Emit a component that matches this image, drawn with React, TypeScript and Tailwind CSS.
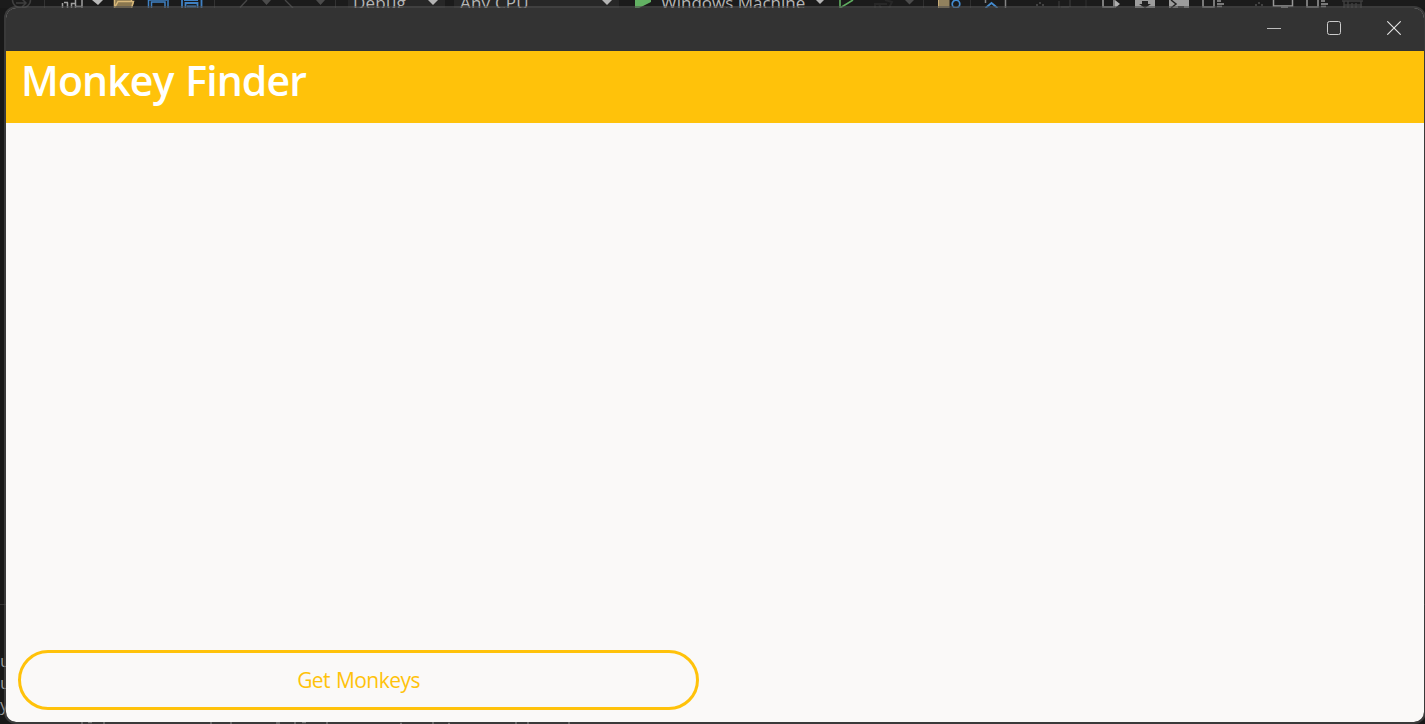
import React from "react";

function ToolbarIconsLeft() {
  return (
    <svg width="348" height="8" viewBox="0 0 348 8" fill="none" className="shrink-0">
      <path d="M12.5 0C12.5 5 17 8 21.5 8S30.500 5 30.500 0M16 3h9M22 -1l4 4-4 4" stroke="#3f3f3f" strokeWidth="1.5" />
      <path d="M44.500 0v8M214.500 0v8M335.500 0v8" stroke="#333333" />
      <path d="M62.500 3v5M68 2.500h-4M67.500 8V2.500M71.500 8V3.500h4M75.500 0v8M82 0v8M75 6.500h7" stroke="#a0a0a0" strokeWidth="1.5" />
      <path d="M92 0h11l-5 5z" fill="#b8b8b8" />
      <path d="M114 0h18v2h2l-2 6h-18z" fill="#8a774f" />
      <path d="M114.500 0v8M115 7l3-5.500h15.500l-2 6.500M131.500 0v1" stroke="#d8b879" strokeWidth="1.5" />
      <path d="M148.500 0v8M168 0v8M151.500 8V2h13.500v6M149 0h18" stroke="#3f81c4" strokeWidth="1.5" />
      <path d="M182 0v8M201.500 0v8M185.500 8V3h12v5M184 0h14M187 6.500h9" stroke="#3f81c4" strokeWidth="1.8" />
      <path d="M247 0l-7 7.500M285 0l8 8" stroke="#474747" strokeWidth="1.4" />
      <path d="M262 0h9l-4.500 5zM316 0h9l-4.500 5z" fill="#4b4b4b" />
    </svg>
  );
}

function DropArrow() {
  return (
    <svg width="10" height="8" viewBox="0 0 10 8" className="shrink-0">
      <path d="M0 0h10L5 5z" fill="#b4b4b4" />
    </svg>
  );
}

function ToolbarIconsRight() {
  return (
    <svg width="590" height="8" viewBox="835 0 590 8" fill="none" className="shrink-0">
      <path d="M840 0v8l13-8" stroke="#5fae60" strokeWidth="1.6" />
      <path d="M875 8V4h4l2 4M885 0l7 2-3 6M879 4h8" stroke="#272727" strokeWidth="2" />
      <path d="M905 0h9l-4.500 4.500z" fill="#4b4b4b" />
      <path d="M923.500 0v8M970.500 0v8M1086 0v8" stroke="#303030" />
      <path d="M938.500 0h11v8h-11z" fill="#91815e" />
      <path d="M938.500 0v8" stroke="#c8ad78" />
      <circle cx="956" cy="4" r="3.800" stroke="#438bd0" strokeWidth="1.700" />
      <path d="M985.500 0v3M1005.500 0v8" stroke="#858585" strokeWidth="1.500" />
      <path d="M985.500 8l6-5 6 5" stroke="#438bd0" strokeWidth="1.800" />
      <path d="M1039 2h2v2h-2zM1036 4h2v2h-2zM1042 4h2v2h-2zM1258 2h2v2h-2zM1255 4h2v2h-2zM1261 4h2v2h-2z" fill="#414141" />
      <path d="M1059 1v7M1061 7h8M1070 0v7" stroke="#343434" strokeWidth="1.500" />
      <path d="M1103 0v7h11V0" stroke="#a0a0a0" strokeWidth="1.500" />
      <path d="M1115 0l5 4-5 4z" fill="#b0b0b0" />
      <path d="M1135 0h20v8h-20zM1169 0h20v8h-20z" fill="#9c9c9c" />
      <path d="M1142 1h6v3h3l-6 4-6-4h3z" fill="#222222" />
      <path d="M1171 0l5 4-5 4M1178 7h6" stroke="#222222" strokeWidth="1.500" />
      <path d="M1203 0v7h11V0M1217 1h4M1217 4h7M1217 6.500h5M1273.500 0v6h19V0M1281 7.500h7M1307 0v7h11V0M1321 1h4M1321 4h7M1321 6.500h5" stroke="#999999" strokeWidth="1.500" />
      <path d="M1342 1h21M1344 1v7M1348 1v7M1352 3v5M1356 3v5M1361 1v7M1344 5h18" stroke="#3e3e3e" strokeWidth="1.500" />
    </svg>
  );
}

function EditorBackdrop() {
  return (
    <div className="flex h-full flex-col justify-between">
      <div className="flex h-2 items-start bg-[#1b1b1b] text-[17px] leading-[8px] text-[#b5b5b5]">
        <ToolbarIconsLeft />
        <div className="flex h-2 w-[97px] shrink-0 justify-between bg-[#272727] pl-[5px] pr-[7px]">
          <span className="-mt-px whitespace-nowrap tracking-[0.2px]">Debug</span>
          <DropArrow />
        </div>
        <div className="ml-[9px] flex h-2 w-[165px] shrink-0 justify-between bg-[#272727] pl-[6px] pr-[7px]">
          <span className="-mt-px whitespace-nowrap tracking-[0.2px]">Any CPU</span>
          <DropArrow />
        </div>
        <svg width="16" height="8" viewBox="0 0 16 8" className="ml-4 shrink-0">
          <path d="M0 0h16v2L4 8H0z" fill="#62b163" />
        </svg>
        <span className="-mt-px ml-[10px] w-[154px] shrink-0 whitespace-nowrap">Windows Machine</span>
        <svg width="20" height="8" viewBox="0 0 20 8" className="shrink-0">
          <path d="M1 0h8L5 4z" fill="#b4b4b4" />
        </svg>
        <ToolbarIconsRight />
      </div>
      <div className="flex h-[120px] flex-col border-t border-[#333333] pt-[45px] text-[17px] leading-[22px] text-[#9a9a9a]">
        <span>u</span>
        <span>u</span>
        <span>y</span>
        <svg width="600" height="4" viewBox="0 0 600 4" className="mt-auto shrink-0">
          <path d="M82 2v2M88 2.500h4M104 2v2M211 2v2M231 2v2M276 3h4M295 2v2M302 2.500h4M327 2v2M400 3.500h2M433 2v2M448 3.500h2M516 2v2M528 2v2M569 2v2" stroke="#a8a8a8" strokeWidth="1.500" />
        </svg>
      </div>
    </div>
  );
}

function TitleBar() {
  return (
    <div className="flex h-[43px] shrink-0 justify-end bg-[#333333]">
      <button aria-label="Minimize" className="flex w-[60px] justify-center pt-[13px]">
        <svg width="14" height="14" viewBox="0 0 14 14" shapeRendering="crispEdges"><path d="M0 7.500h14" stroke="#bdbdbd" /></svg>
      </button>
      <button aria-label="Maximize" className="flex w-[60px] justify-center pt-[13px]">
        <svg width="14" height="14" viewBox="0 0 14 14" fill="none"><rect x=".5" y=".5" width="13" height="13" rx="2" stroke="#cccccc" /></svg>
      </button>
      <button aria-label="Close" className="flex w-[60px] justify-center pt-[13px]">
        <svg width="14" height="14" viewBox="0 0 14 14" fill="none"><path d="M.3.3l13.400 13.400M13.700.3L.3 13.700" stroke="#e5e5e5" strokeWidth="1.100" /></svg>
      </button>
    </div>
  );
}

export default function App() {
  return (
    <div className="relative h-[724px] w-[1425px] overflow-hidden bg-[#181818] font-['Open_Sans','Noto_Sans',sans-serif]">
      <EditorBackdrop />
      <div className="absolute left-1 top-1.5 flex h-[718px] w-[1422px] flex-col overflow-hidden rounded-[12px] border-2 border-[#525252]/60 bg-[#faf9f8] bg-clip-padding">
        <TitleBar />
        <header className="h-[72px] shrink-0 bg-[#ffc20a] pl-[15px]">
          <h1 className="whitespace-nowrap text-[41px] font-semibold leading-[58px] tracking-[-0.9px] text-white [word-spacing:2px]">Monkey Finder</h1>
        </header>
        <main className="flex grow flex-col items-start justify-end pb-3 pl-3">
          <button className="flex h-[60px] w-[681px] items-center justify-center rounded-[30px] border-[3px] border-[#ffc20a] text-[21px] text-[#ffc20a]">
            <span className="pt-0.5 tracking-[-0.55px] [word-spacing:1px]">Get Monkeys</span>
          </button>
        </main>
      </div>
    </div>
  );
}
